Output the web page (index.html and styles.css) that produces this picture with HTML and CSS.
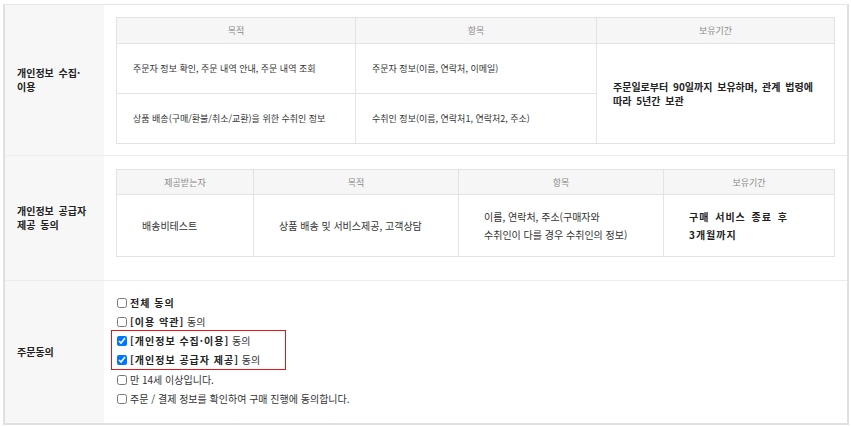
FILE: index.html
```html
<!DOCTYPE html>
<html lang="ko">
<head>
    <meta charset="UTF-8">
    <title>주문 동의</title>
    <link rel="stylesheet" href="styles.css">
</head>
<body>

<div class="agree">
    <div class="agree-row row-collect">
        <div class="agree-head">개인정보 수집·<br>이용</div>
        <div class="agree-body">
            <table class="info-table">
                <colgroup>
                    <col class="c-purpose">
                    <col class="c-item">
                    <col>
                </colgroup>
                <thead>
                    <tr><th>목적</th><th>항목</th><th>보유기간</th></tr>
                </thead>
                <tbody>
                    <tr>
                        <td>주문자 정보 확인, 주문 내역 안내, 주문 내역 조회</td>
                        <td>주문자 정보(이름, 연락처, 이메일)</td>
                        <td rowspan="2" class="strong">주문일로부터 90일까지 보유하며, 관계 법령에<br>따라 5년간 보관</td>
                    </tr>
                    <tr>
                        <td>상품 배송(구매/환불/취소/교환)을 위한 수취인 정보</td>
                        <td>수취인 정보(이름, 연락처1, 연락처2, 주소)</td>
                    </tr>
                </tbody>
            </table>
        </div>
    </div>

    <div class="agree-row row-provide">
        <div class="agree-head">개인정보 공급자<br>제공 동의</div>
        <div class="agree-body">
            <table class="info-table wide">
                <colgroup>
                    <col class="c-receiver">
                    <col class="c-goal">
                    <col class="c-goal">
                    <col>
                </colgroup>
                <thead>
                    <tr><th>제공받는자</th><th>목적</th><th>항목</th><th>보유기간</th></tr>
                </thead>
                <tbody>
                    <tr>
                        <td>배송비테스트</td>
                        <td>상품 배송 및 서비스제공, 고객상담</td>
                        <td>이름, 연락처, 주소(구매자와<br>수취인이 다를 경우 수취인의 정보)</td>
                        <td class="strong">구매 서비스 종료 후<br>3개월까지</td>
                    </tr>
                </tbody>
            </table>
        </div>
    </div>

    <div class="agree-row row-order">
        <div class="agree-head">주문동의</div>
        <div class="agree-body">
            <ul class="check-list">
                <li><label><input type="checkbox"><b>전체 동의</b></label></li>
                <li><label><input type="checkbox"><b>[이용 약관]</b>&nbsp;동의</label></li>
                <li class="required">
                    <ul>
                        <li><label><input type="checkbox" checked><b>[개인정보 수집·이용]</b>&nbsp;동의</label></li>
                        <li><label><input type="checkbox" checked><b>[개인정보 공급자 제공]</b>&nbsp;동의</label></li>
                    </ul>
                </li>
                <li class="after"><label><input type="checkbox">만 14세 이상입니다.</label></li>
                <li><label><input type="checkbox">주문 / 결제 정보를 확인하여 구매 진행에 동의합니다.</label></li>
            </ul>
        </div>
    </div>
</div>

</body>
</html>
```

FILE: styles.css
```css
/* Reset */
* {
    box-sizing: border-box;
    margin: 0;
    padding: 0;
}

body {
    font-family: "Noto Sans CJK KR", "Noto Sans", sans-serif;
    font-size: 10px;
    color: #333;
    background: #fff;
    padding: 4px 0 0 3px;
}

/* Outer box */
.agree {
    width: 846px;
    border: 1px solid #e6e6e6;
    border-left: 2px solid #e0e0e0;
    border-right: 2px solid #e0e0e0;
    border-bottom: 2px solid #e0e0e0;
}

.agree-row {
    display: grid;
    grid-template-columns: 99px 1fr;
    border-bottom: 1px solid #ececec;
}

.agree-row:last-child {
    border-bottom: none;
}

.agree-head {
    background-color: #f7f7f7;
    padding-left: 12px;
    display: flex;
    align-items: center;
    font-weight: bold;
    color: #222;
    line-height: 14px;
    word-spacing: 2px;
}

.agree-body {
    padding: 12px 12px;
}

.row-collect .agree-body {
    padding: 12px 12px 11px;
}

.row-provide .agree-body {
    padding: 13px 12px 23px;
}

.row-order {
    height: 142px;
}

.row-order .agree-body {
    padding: 12px 12px 0;
}

/* Info tables */
.info-table {
    width: 719px;
    table-layout: fixed;
    border-collapse: collapse;
    border: 1px solid #e3e3e3;
}

.c-purpose { width: 239px; }
.c-item { width: 241px; }
.c-receiver { width: 137px; }
.c-goal { width: 205px; }

.info-table th {
    background-color: #f6f6f6;
    color: #8a8a8a;
    font-size: 9px;
    font-weight: normal;
    height: 26px;
    border: 1px solid #e3e3e3;
}

.info-table td {
    border: 1px solid #e3e3e3;
    padding: 0 16px;
    height: 50px;
    font-size: 9px;
    color: #333;
    line-height: 14px;
}

.info-table td.strong {
    font-size: 10px;
    font-weight: bold;
    color: #222;
    word-spacing: 2px;
}

.info-table.wide th {
    height: 25px;
}

.info-table.wide td {
    padding: 0 24px 0 25px;
    height: 62px;
    font-size: 10px;
    line-height: 18px;
}

.info-table.wide td.strong {
    letter-spacing: 1px;
}

/* Agreement checkboxes */
.check-list {
    list-style: none;
}

.check-list li {
    height: 19px;
}

.check-list li.required {
    height: auto;
    width: 175px;
    margin: -1px 0 -1px -5px;
    padding-left: 4px;
    border: 1px solid #e8141b;
}

.check-list li.after {
    margin-top: 1px;
}

.check-list ul {
    list-style: none;
}

.check-list label {
    display: flex;
    align-items: center;
    height: 100%;
    padding-left: 1px;
    color: #333;
}

.check-list b {
    color: #222;
    letter-spacing: 1px;
}

.check-list input {
    width: 10px;
    height: 10px;
    margin: 0 3px 0 0;
}
```
